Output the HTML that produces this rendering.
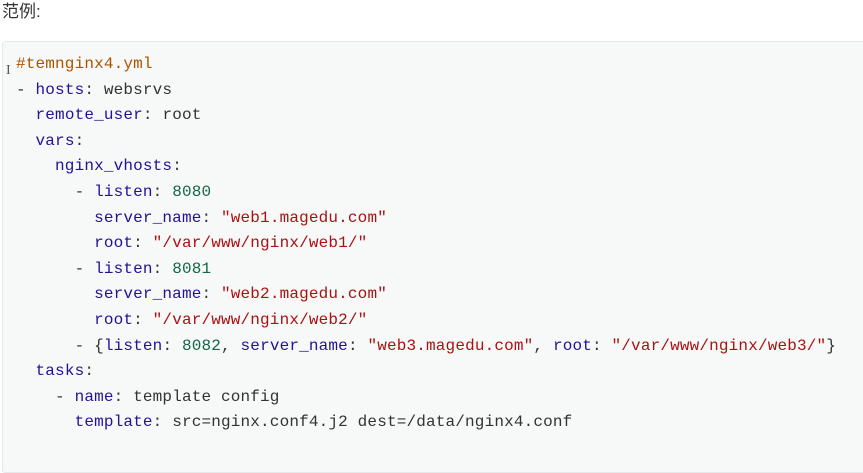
<!DOCTYPE html>
<html><head><meta charset="utf-8"><style>
body{margin:0;width:863px;height:455px;background:#fff;overflow:hidden;font-family:"Liberation Sans","Noto Sans CJK SC",sans-serif}
.h{position:absolute;left:2px;top:1px;font-size:17px;color:#333;line-height:22px}
.box{position:absolute;left:2px;top:41px;width:880px;height:430px;background:#f7f8f8;border:1px solid #e6e8e9;border-radius:3px}
pre{position:absolute;left:16px;top:52px;margin:0;font-family:"Liberation Mono","DejaVu Sans Mono",monospace;font-size:16px;letter-spacing:0.16px;line-height:25.6px;color:#333}
.k{color:#221199}.c{color:#aa5500}.s{color:#aa1111}.n{color:#116644}
.cur{position:absolute;left:6px;top:63px;font-size:14px;color:#555;font-family:"Liberation Serif",serif}
</style></head><body>
<div class="h">范例:</div>
<div class="box"></div>
<div class="cur">I</div>
<pre><span class="c">#temnginx4.yml</span>
- <span class="k">hosts</span>: websrvs
  <span class="k">remote_user</span>: root
  <span class="k">vars</span>:
    <span class="k">nginx_vhosts</span>:
      - <span class="k">listen</span>: <span class="n">8080</span>
        <span class="k">server_name</span>: <span class="s">"web1.magedu.com"</span>
        <span class="k">root</span>: <span class="s">"/var/www/nginx/web1/"</span>
      - <span class="k">listen</span>: <span class="n">8081</span>
        <span class="k">server_name</span>: <span class="s">"web2.magedu.com"</span>
        <span class="k">root</span>: <span class="s">"/var/www/nginx/web2/"</span>
      - {<span class="k">listen</span>: <span class="n">8082</span>, <span class="k">server_name</span>: <span class="s">"web3.magedu.com"</span>, <span class="k">root</span>: <span class="s">"/var/www/nginx/web3/"</span>}
  <span class="k">tasks</span>:
    - <span class="k">name</span>: template config
      <span class="k">template</span>: src=nginx.conf4.j2 dest=/data/nginx4.conf</pre>
</body></html>
